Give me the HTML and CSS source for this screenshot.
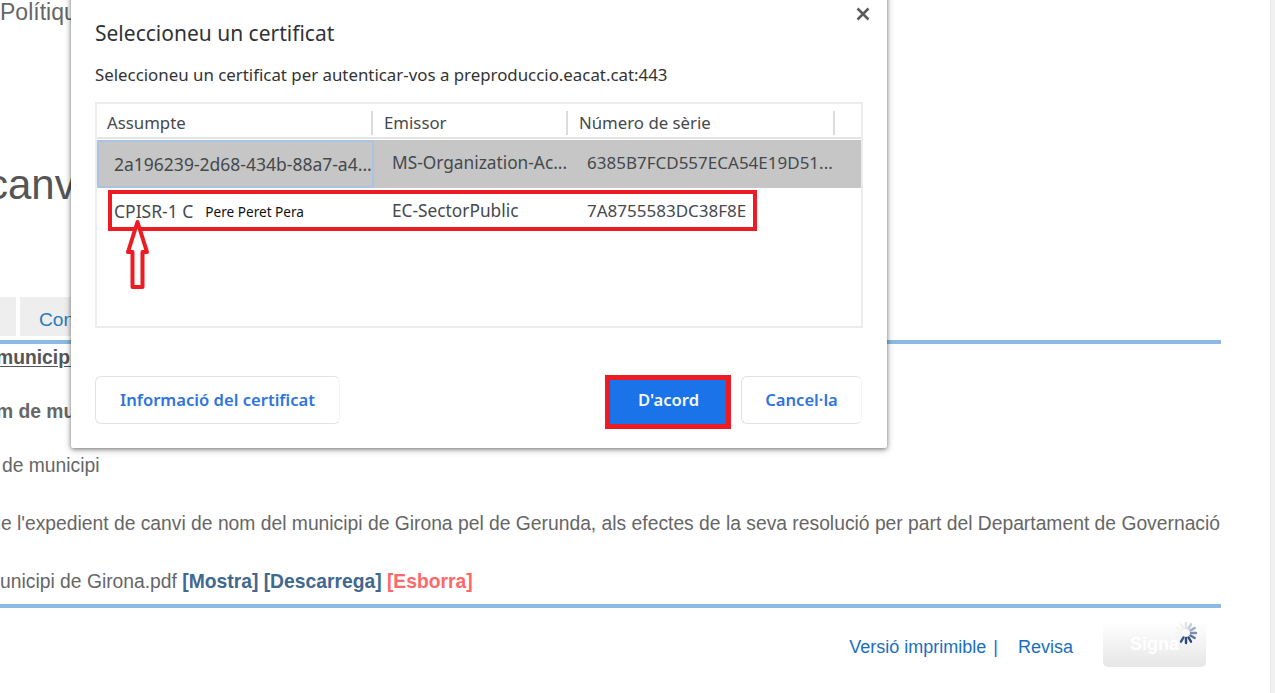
FILE: index.html
```html
<!DOCTYPE html>
<html lang="ca">
<head>
<meta charset="utf-8">
<title>Seleccioneu un certificat</title>
<link rel="stylesheet" href="styles.css">
</head>
<body>
<div class="page">
  <main class="content">
    <div class="breadcrumb">Polítiques</div>
    <h1 class="heading">canvi</h1>
    <nav class="tabs">
      <span class="tab tab-first"></span>
      <span class="tab tab-second">Consulta</span>
    </nav>
    <section class="form">
      <div class="row row-title"><u>municipi</u></div>
      <div class="row row-label">m de municipi</div>
      <div class="row row-type">de municipi</div>
      <div class="row row-long">Aprovació de l'expedient de canvi de nom del municipi de Girona pel de Gerunda, als efectes de la seva resolució per part del Departament de Governació</div>
      <div class="row row-file">municipi de Girona.pdf <a class="file-link">[Mostra]</a> <a class="file-link">[Descarrega]</a> <a class="file-link file-delete">[Esborra]</a></div>
    </section>
    <footer class="actions">
      <a class="action-link">Versió imprimible</a><span class="action-sep">|</span>
      <a class="action-link action-revise">Revisa</a>
      <span class="sign">Signa
        <svg class="spinner" width="26" height="26" viewBox="0 0 26 26" aria-hidden="true">
          <g stroke-width="2.4" stroke-linecap="round">
            <path d="M13 3v5" stroke="#dfe4ec"/>
            <path d="M18 4.3l-2.5 4.3" stroke="#c3ccdb"/>
            <path d="M21.7 8l-4.3 2.5" stroke="#9eacc4"/>
            <path d="M23 13h-5" stroke="#7d8fae"/>
            <path d="M21.7 18l-4.3-2.5" stroke="#5a7098"/>
            <path d="M18 21.7l-2.5-4.3" stroke="#2f4a7c"/>
            <path d="M13 23v-5" stroke="#2c4778"/>
            <path d="M8 21.7l2.5-4.3" stroke="#3b5585"/>
            <path d="M4.3 18l4.3-2.5" stroke="#f2f3f6"/>
            <path d="M3 13h5" stroke="#f4f4f6"/>
            <path d="M4.3 8l4.3 2.5" stroke="#f4f5f7"/>
            <path d="M8 4.3l2.5 4.3" stroke="#eef0f4"/>
          </g>
        </svg>
      </span>
    </footer>
  </main>
  <div class="scrollbar"></div>

  <div class="dialog" role="dialog">
    <svg class="close" width="14" height="14" viewBox="0 0 14 14" aria-hidden="true"><path d="M1.5 1.5l11 11M12.5 1.5l-11 11" stroke="#5a5a5a" stroke-width="2.5" fill="none"/></svg>
    <h2 class="dialog-title">Seleccioneu un certificat</h2>
    <p class="dialog-text">Seleccioneu un certificat per autenticar-vos a preproduccio.eacat.cat:443</p>
    <div class="cert-table">
      <div class="cert-head">
        <span class="head-cell head-subject">Assumpte</span>
        <span class="head-cell head-issuer">Emissor</span>
        <span class="head-cell head-serial">Número de sèrie</span>
        <span class="head-cell head-end"></span>
      </div>
      <div class="cert-row cert-selected">
        <span class="cell cell-subject cell-focus">2a196239-2d68-434b-88a7-a4...</span>
        <span class="cell cell-issuer">MS-Organization-Ac...</span>
        <span class="cell cell-serial">6385B7FCD557ECA54E19D51...</span>
      </div>
      <div class="cert-row">
        <span class="cell cell-subject">CPISR-1 C<span class="name-patch">Pere Peret Pera</span></span>
        <span class="cell cell-issuer">EC-SectorPublic</span>
        <span class="cell cell-serial">7A8755583DC38F8E</span>
      </div>
    </div>
    <div class="dialog-buttons">
      <button class="btn btn-info">Informació del certificat</button>
      <button class="btn btn-ok">D'acord</button>
      <button class="btn btn-cancel">Cancel·la</button>
    </div>
  </div>

  <div class="mark mark-row"></div>
  <div class="mark mark-ok"></div>
  <svg class="mark-arrow" width="26" height="71" viewBox="0 0 26 71" aria-hidden="true">
    <path d="M12.5 4L3 34h4.500v35h10V34H22z" fill="#fff" stroke="#ed1c24" stroke-width="4" stroke-linejoin="round"/>
  </svg>
</div>
</body>
</html>
```
FILE: styles.css
```css
* { box-sizing: border-box; }
html, body { margin: 0; height: 100%; overflow: hidden; background: #fff; }
.page {
  position: relative;
  width: 1275px;
  height: 693px;
  overflow: hidden;
  display: flex;
  font-family: "Liberation Sans", Arial, sans-serif;
  color: #5f5f5f;
}
.content { width: 1221px; flex: none; }
.scrollbar {
  margin-left: auto;
  width: 5px;
  background: #f1f1f1;
  border-left: 1px solid #e6e6e6;
}
.breadcrumb { margin: 0; height: 27px; font-size: 23px; line-height: 24px; white-space: nowrap; color: #666; }
.heading {
  margin: 0 0 0 -13px;
  padding-top: 130px;
  height: 270px;
  font-size: 42px;
  line-height: 56px;
  font-weight: 400;
  color: #555;
  white-space: nowrap;
}
.tabs { display: flex; gap: 4px; height: 47px; margin-left: -30px; border-bottom: 4px solid #8cbae2; }
.tab { height: 39px; background: #eee; }
.tab-first { width: 46px; }
.tab-second { width: 120px; padding-left: 19px; font-size: 19.2px; line-height: 45px; color: #2a7ab8; white-space: nowrap; }
.form { height: 258px; font-size: 19.3px; line-height: 24px; }
.row { white-space: nowrap; }
.row-title { margin: 2px 0 0 -4px; font-weight: 700; color: #555; }
.row u { text-underline-offset: 2px; }
.row-label { margin: 30px 0 0 -4px; font-weight: 700; color: #666; }
.row-type { margin: 30px 0 0 2px; color: #666; }
.row-long { display: flex; justify-content: flex-end; width: 1220px; margin-top: 34px; color: #666; }
.row-file { margin: 34px 0 0 -16px; color: #666; }
.file-link { font-weight: 700; color: #41688f; }
.file-delete { color: #ff6868; }
.actions {
  border-top: 4px solid #8cbae2;
  display: flex;
  align-items: center;
  justify-content: flex-end;
  height: 68px;
  padding: 8px 15px 0 0;
  font-size: 18px;
}
.action-link { margin-top: 6px; color: #1a6ec2; white-space: nowrap; }
.action-sep { margin: 6px 0 0 7px; color: #1a6ec2; }
.action-revise { margin-left: 20px; }
.sign {
  position: relative;
  width: 103px;
  height: 45px;
  margin-left: 30px;
  border-radius: 0 0 5px 5px;
  background: linear-gradient(#fff, #e6e6e6);
  color: #fff;
  font-weight: 700;
  text-align: center;
  line-height: 44px;
}
.spinner { position: absolute; left: 70px; top: -2px; }

.dialog {
  position: absolute;
  left: 71px;
  top: -10px;
  width: 816px;
  height: 458px;
  padding: 10px 24px 0;
  background: #fff;
  border-radius: 2px;
  box-shadow: 0 1px 4px rgba(0,0,0,.45), 0 2px 8px rgba(0,0,0,.2);
  font-family: "Noto Sans", "Open Sans", sans-serif;
  color: #3c4043;
  display: flex;
  flex-direction: column;
}
.close { position: absolute; right: 17px; top: 17px; }
.dialog-title { margin: 20px 0 0; height: 32px; font-size: 21px; line-height: 26px; font-weight: 400; color: #303336; }
.dialog-text { margin: 12px 0 0; height: 38px; font-size: 16.85px; line-height: 22px; color: #333; }
.cert-table {
  width: 768px;
  height: 226px;
  border: 2px solid #ececec;
  display: flex;
  flex-direction: column;
  font-size: 16.8px;
}
.cert-head {
  height: 35px;
  display: flex;
  align-items: center;
  border-bottom: 2px solid #e4e4e4;
  flex: none;
  padding-top: 4px;
}
.head-cell { height: 24px; line-height: 24px; padding-left: 10px; border-right: 2px solid #dcdcdc; color: #45494d; white-space: nowrap; }
.head-subject { width: 276px; }
.head-issuer { width: 195px; padding-left: 11px; }
.head-serial { width: 267px; padding-left: 11px; }
.head-end { border-right: 0; }
.cert-row { height: 48px; display: flex; align-items: center; flex: none; font-size: 17px; }
.cert-selected { margin-top: 1px; background: #c6c6c6; }
.cell { height: 100%; line-height: 46px; white-space: nowrap; color: #45494d; }
.cell-subject { width: 277px; padding-left: 17px; font-size: 17.5px; }
.cell-focus { border: 2px solid #a9c3e4; border-radius: 3px; padding-left: 15px; line-height: 44px; }
.cell-issuer { width: 195px; padding-left: 18px; font-size: 17.3px; }
.cell-serial { padding-left: 18px; }
.name-patch { margin-left: 12px; font-size: 13.6px; color: #111; vertical-align: 1px; }
.dialog-buttons { display: flex; margin-top: 48px; }
.btn {
  height: 48px;
  border: 1px solid #e2e2e2;
  border-right-color: #f3f3f3;
  border-radius: 6px;
  background: #fff;
  font-family: inherit;
  font-size: 16.6px;
  font-weight: 600;
  color: #2f74e0;
  padding: 0 0 2px;
}
.btn-info { width: 245px; }
.btn-ok { width: 123px; margin-left: 267px; background: #1a73e8; border: 0; border-radius: 0; color: #f4f8fe; }
.btn-cancel { width: 121px; margin-left: 11px; font-feature-settings: "locl" 0; }

.mark { position: absolute; border-style: solid; border-color: #ed1c24; pointer-events: none; }
.mark-row { left: 108px; top: 190px; width: 649px; height: 41px; border-width: 4px; }
.mark-ok { left: 605px; top: 375px; width: 126px; height: 54px; border-width: 5px; }
.mark-arrow { position: absolute; left: 125px; top: 218px; }
```
